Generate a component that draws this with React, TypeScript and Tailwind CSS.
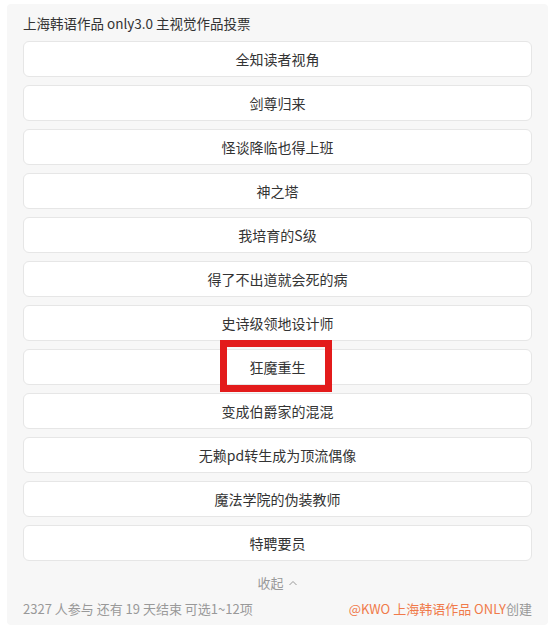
import React from "react";

const items = [
  "全知读者视角",
  "剑尊归来",
  "怪谈降临也得上班",
  "神之塔",
  "我培育的S级",
  "得了不出道就会死的病",
  "史诗级领地设计师",
  "狂魔重生",
  "变成伯爵家的混混",
  "无赖pd转生成为顶流偶像",
  "魔法学院的伪装教师",
  "特聘要员",
];

export default function App() {
  return (
    <div
      className="w-[559px] h-[635px] bg-white relative"
      style={{ fontFamily: '"Noto Sans CJK SC", "Noto Sans", sans-serif' }}
    >
      <div className="absolute left-[7px] top-[4px] w-[541px] h-[621px] bg-[#f7f7f7] rounded-[4px] px-[16px] pt-[11px]">
        <div className="text-[13.5px] leading-[17px] text-[#333] h-[26px]">
          上海韩语作品 only3.0 主视觉作品投票
        </div>
        <div className="flex flex-col gap-[8px]">
          {items.map((t) => (
            <div
              key={t}
              className="h-[36px] bg-white border border-[#e6e6e6] rounded-[6px] flex items-center justify-center text-[14px] text-[#333]"
            >
              {t}
            </div>
          ))}
        </div>
        <div className="flex items-center justify-center h-[22px] mt-[11px] text-[13px] text-[#999] gap-[4px]">
          <span>收起</span>
          <svg width="10" height="10" viewBox="0 0 10 10" fill="none">
            <path d="M1.5 7 L5 3.5 L8.5 7" stroke="#999" strokeWidth="1" />
          </svg>
        </div>
        <div className="flex justify-between items-center mt-[5px] text-[13px] text-[#999]">
          <span>2327 人参与 还有 19 天结束 可选1~12项</span>
          <span>
            <span className="text-[#f07a4a]">@KWO 上海韩语作品 ONLY</span>创建
          </span>
        </div>
      </div>
      <div className="absolute left-[220px] top-[340px] w-[112px] h-[52px] border-[7px] border-[#e31b1b]" />
    </div>
  );
}
